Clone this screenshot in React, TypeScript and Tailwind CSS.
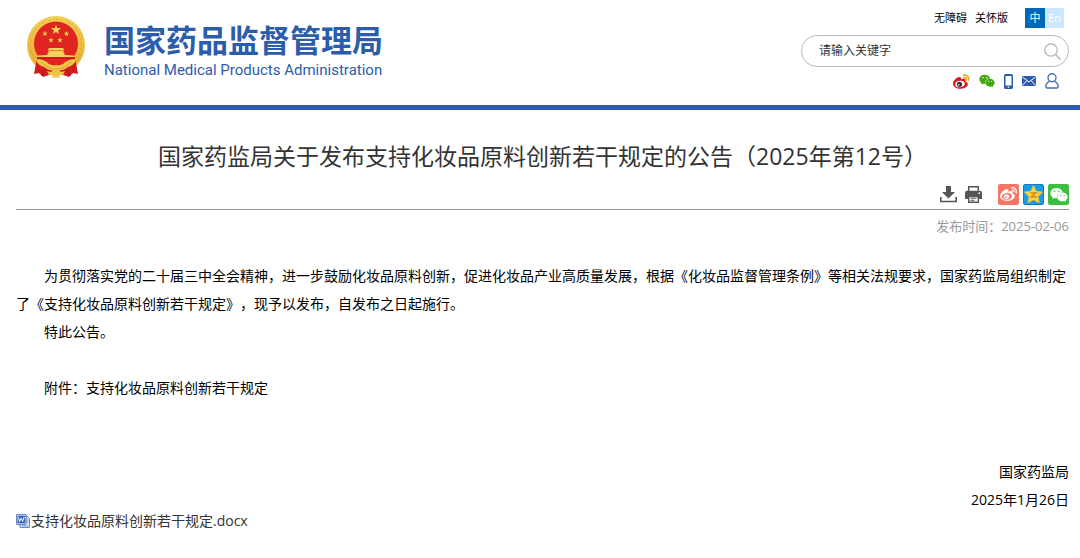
import React from 'react';
import { FaWeibo, FaWeixin } from 'react-icons/fa';

function Emblem() {
  return (
    <svg viewBox="0 0 58 62" className="h-[62px] w-[58px]" aria-hidden="true">
      <defs>
        <linearGradient id="gold" x1="0" y1="0" x2="0" y2="1">
          <stop offset="0" stopColor="#f3cf56" />
          <stop offset="1" stopColor="#e3a92b" />
        </linearGradient>
      </defs>
      <circle cx="29" cy="29" r="29" fill="url(#gold)" />
      <circle cx="29" cy="29" r="25.500" fill="none" stroke="#dda632" strokeWidth="1" strokeDasharray="2 2" />
      <circle cx="29" cy="27.500" r="22" fill="#e02420" />
      <path d="M10 42L7 58l5-1 4 4 9-3h8l9 3 4-4 5 1-3-16-4 1c-2 6-7 8-15 8s-13-2-15-8z" fill="#d11d1d" />
      <path d="M29 8.500l1.300 3.500 3.700.1-2.900 2.300 1 3.600-3.100-2.100-3.100 2.100 1-3.600-2.900-2.300 3.700-.1z" fill="#f4cf52" />
      {[[18, 17.500], [39.500, 17.500], [24, 24], [33, 24]].map(([x, y]) => (
        <path key={`${x}`} transform={`translate(${x} ${y})`} d="M0-2.700L.7-.8l2 .1L1.100.5l.6 2L0 1.400l-1.700 1.100.6-2L-2.700-.7l2-.1z" fill="#f4cf52" />
      ))}
      <path d="M22 32h14l1.500 2.500h-17zM21.500 35h15v2h-15zM11 39.500l9.500-.5v-2h17v2l9.500.5V41H11z" fill="#f5d25c" />
      <path d="M10 41h38v2H10z" fill="#c81c1c" />
      <path d="M9 43q8 0 13 5 4 3 7 1 3 2 7-1 5-5 13-5-1 6-8 8-7 5-12 3-5 2-12-3-7-2-8-8z" fill="#f1c84c" />
      <path d="M14 46q8 7 15 7t15-7" fill="none" stroke="#d9a32e" strokeWidth="1" />
      <path d="M20 55l4 1 2-2h6l2 2 4-1-2 4-4 .5 1 2h-8l1-2-4-.5z" fill="#efc248" />
      <path d="M17 54l-2 6M41 54l2 6" stroke="#9f1515" strokeWidth=".8" />
    </svg>
  );
}

function WeiboColor() {
  return (
    <svg viewBox="0 0 17 15" className="h-[15px] w-[17px]" aria-hidden="true">
      <path d="M0 9.500C0 6.500 4.500 2.500 7 3c1.400.3 1.200 1.600 1 2.300 1.500-.7 4.200-1 4.500.6.1.7-.3 1.300-.2 1.600.3.300 2.700.8 2.500 3-.3 2.500-3.800 4.300-7.600 4.300C3.300 14.800 0 12.700 0 9.500z" fill="#e0141c" />
      <ellipse cx="7" cy="10" rx="4.800" ry="3.200" fill="#fff" transform="rotate(-8 7 10)" />
      <circle cx="6.500" cy="10.300" r="2.600" fill="#333" />
      <circle cx="5.700" cy="10.800" r=".9" fill="#ddd" />
      <path d="M10.800 1.200c3-.7 5.600 1.900 4.700 5M11 3.700c1.600-.3 2.700.9 2.300 2.300" fill="none" stroke="#f2a620" strokeWidth="1.700" strokeLinecap="round" />
    </svg>
  );
}

function PhoneIcon() {
  return (
    <svg viewBox="0 0 9 15" className="h-[15px] w-[9px]" aria-hidden="true">
      <path fillRule="evenodd" d="M1.500 0h6A1.500 1.500 0 0 1 9 1.500v12A1.500 1.500 0 0 1 7.500 15h-6A1.500 1.500 0 0 1 0 13.500v-12A1.500 1.500 0 0 1 1.500 0zM1.500 2v9.500h6V2zM3.800 12.500v1.300h1.400v-1.300z" fill="#2d5caa" />
    </svg>
  );
}

function MailIcon() {
  return (
    <svg viewBox="0 0 14 10" className="h-[10px] w-[14px]" aria-hidden="true">
      <rect width="14" height="10" rx="1" fill="#2d5caa" />
      <path d="M.5 1L7 6l6.500-5M.5 9.300l4.300-4.600M13.500 9.300L9.200 4.700" fill="none" stroke="#fff" strokeWidth="1" />
    </svg>
  );
}

function UserIcon() {
  return (
    <svg viewBox="0 0 14 16" className="h-4 w-[14px]" fill="none" stroke="#4a6fb3" strokeWidth="1.400" aria-hidden="true">
      <circle cx="7" cy="4.800" r="4" />
      <path d="M4.700 8.300C2 9.300.8 11 .8 13.500c0 1 .4 1.500 1.400 1.500h9.600c1 0 1.400-.5 1.400-1.500 0-2.500-1.200-4.200-3.900-5.200" />
    </svg>
  );
}

function DownloadIcon() {
  return (
    <svg viewBox="0 0 17 17" className="h-[17px] w-[17px]" aria-hidden="true">
      <path d="M6 0h5v6h4l-6.500 6.500L2 6h4z" fill="#555" />
      <path d="M.8 11v4.500h15.400V11" fill="none" stroke="#555" strokeWidth="1.600" />
    </svg>
  );
}

function PrintIcon() {
  return (
    <svg viewBox="0 0 17 17" className="h-[17px] w-[17px]" aria-hidden="true">
      <path d="M3.700 5V.8h9.600V5" fill="none" stroke="#555" strokeWidth="1.500" />
      <path d="M2 4.800h13a2 2 0 0 1 2 2V13h-3v-3H3v3H0V6.800a2 2 0 0 1 2-2z" fill="#555" />
      <circle cx="14.300" cy="7.200" r=".9" fill="#fff" />
      <path d="M3.700 10.500h9.600v5.700H3.700z" fill="#fff" stroke="#555" strokeWidth="1.400" />
      <path d="M5.500 12.300h6M5.500 14.300h4" stroke="#555" strokeWidth="1" />
    </svg>
  );
}

function QzoneIcon() {
  return (
    <svg viewBox="0 0 21 21" className="h-[21px] w-[21px]" aria-hidden="true">
      <rect x=".5" y=".5" width="20" height="20" rx="1.500" fill="#159cec" stroke="#1479bd" />
      <path d="M10.500 1.500l2.700 5.800 6.400.8-4.700 4.400 1.300 6.300-5.700-3.100-5.700 3.100 1.300-6.300L1.400 8.100l6.400-.8z" fill="#ffd23a" stroke="#ffc522" strokeWidth=".8" strokeLinejoin="round" />
      <path d="M7.500 8.800h5.500L8 12.800h6" fill="none" stroke="#c98212" strokeWidth="1.200" />
    </svg>
  );
}

function WordIcon() {
  return (
    <svg viewBox="0 0 14 14" className="h-[14px] w-[14px]" aria-hidden="true">
      <path d="M4 2h7l2.500 2.500v9H4z" fill="#dce8f8" stroke="#5d80bf" strokeWidth=".9" />
      <path d="M10.500 6h2M10.500 8h2M6 12h6.500" stroke="#6f91cc" strokeWidth=".9" />
      <rect x=".4" y=".4" width="9.700" height="10.200" rx="1" fill="#a9c3ec" stroke="#3e65b1" strokeWidth=".8" />
      <rect x="1.700" y="2" width="7.200" height="7" fill="#3463b8" />
      <path d="M2.500 3.300l1 4.200L5.300 4l1.200 3.500L8.200 3" fill="none" stroke="#fff" strokeWidth="1" />
    </svg>
  );
}

function Header() {
  return (
    <header className="flex h-[110px] items-start justify-between border-b-[5px] border-[#2d5caa] pr-[11px] pl-[27px]">
      <a href="#home" className="flex gap-[19px] pt-4 text-[#2d5caa]">
        <Emblem />
        <span className="flex flex-col pt-2">
          <span className="text-[31px] leading-8 font-bold whitespace-nowrap">国家药品监督管理局</span>
          <span className="font-[Roboto] text-[15px] leading-7 whitespace-nowrap">National Medical Products Administration</span>
        </span>
      </a>
      <div className="flex w-[268px] flex-col pt-2">
        <div className="flex h-5 items-center justify-end gap-2 pr-[5px] text-[11px] text-black">
          <a href="#accessible">无障碍</a>
          <a href="#care">关怀版</a>
          <span className="ml-[9px] flex text-white">
            <a href="#zh" className="flex h-5 w-5 items-center justify-center bg-[#0168b7]">中</a>
            <a href="#en" className="flex h-5 w-[19px] items-center justify-center bg-[#cce8ff]">En</a>
          </span>
        </div>
        <form className="mt-[7px] flex h-8 items-center rounded-full border border-[#bbb] pr-[7px] pl-[17px]">
          <input
            type="text"
            aria-label="请输入关键字"
            placeholder="请输入关键字"
            className="min-w-0 flex-1 bg-transparent text-xs text-[#333] outline-none placeholder:text-[#333]"
          />
          <button type="button" aria-label="搜索">
            <svg viewBox="0 0 17 17" className="h-[17px] w-[17px]" fill="none" stroke="#b0b0b0" strokeWidth="1.200" aria-hidden="true">
              <circle cx="7" cy="7" r="6.200" />
              <path d="M11.500 11.500l5 5" />
            </svg>
          </button>
        </form>
        <div className="mt-[6px] flex h-4 items-center justify-end gap-[9px] pr-[10px]">
          <a href="#weibo" aria-label="微博"><WeiboColor /></a>
          <a href="#wechat" aria-label="微信"><FaWeixin className="h-4 w-4 text-[#43a80f]" /></a>
          <a href="#mobile" aria-label="手机版"><PhoneIcon /></a>
          <a href="#mail" aria-label="邮箱"><MailIcon /></a>
          <a href="#user" aria-label="用户"><UserIcon /></a>
        </div>
      </div>
    </header>
  );
}

export default function App() {
  return (
    <div className="bg-white font-['Open_Sans','Noto_Sans_CJK_SC',sans-serif] [text-spacing-trim:space-all]" lang="zh-CN">
      <Header />
      <main className="pr-[11px] pl-4">
        <h1 className="pt-[30px] text-center text-[23px] leading-8 text-[#333]">
          国家药监局关于发布支持化妆品原料创新若干规定的公告（2025年第12号）
        </h1>
        <div className="mt-3 flex h-[26px] items-start justify-end border-b border-[#999]">
          <div className="flex items-center">
            <button type="button" aria-label="下载" className="mr-2"><DownloadIcon /></button>
            <button type="button" aria-label="打印" className="mr-4"><PrintIcon /></button>
            <span className="flex gap-1">
              <a href="#share-weibo" aria-label="分享到微博" className="flex h-[21px] w-[21px] items-center justify-center rounded-xs bg-[#f57567] text-white">
                <FaWeibo className="h-[17px] w-[17px]" />
              </a>
              <a href="#share-qzone" aria-label="分享到QQ空间"><QzoneIcon /></a>
              <a href="#share-wechat" aria-label="分享到微信" className="flex h-[21px] w-[21px] items-center justify-center rounded-xs bg-[#3cbf3f] text-white">
                <FaWeixin className="h-[18px] w-[18px]" />
              </a>
            </span>
          </div>
        </div>
        <p className="pt-2 text-right text-[13px] leading-4 text-[#999]">发布时间：2025-02-06</p>
        <article className="pt-7 text-sm leading-7 text-black">
          <p className="indent-[28px]">
            为贯彻落实党的二十届三中全会精神，进一步鼓励化妆品原料创新，促进化妆品产业高质量发展，根据《化妆品监督管理条例》等相关法规要求，国家药监局组织制定了《支持化妆品原料创新若干规定》，现予以发布，自发布之日起施行。
          </p>
          <p className="indent-[28px]">特此公告。</p>
          <p className="mt-7 indent-[28px]">附件：支持化妆品原料创新若干规定</p>
          <div className="mt-14 text-right">
            <p>国家药监局</p>
            <p>2025年1月26日</p>
          </div>
        </article>
        <a href="#attachment" className="flex items-center gap-px pb-6 text-sm leading-[14px] text-[#333]">
          <WordIcon />
          支持化妆品原料创新若干规定.docx
        </a>
      </main>
    </div>
  );
}
